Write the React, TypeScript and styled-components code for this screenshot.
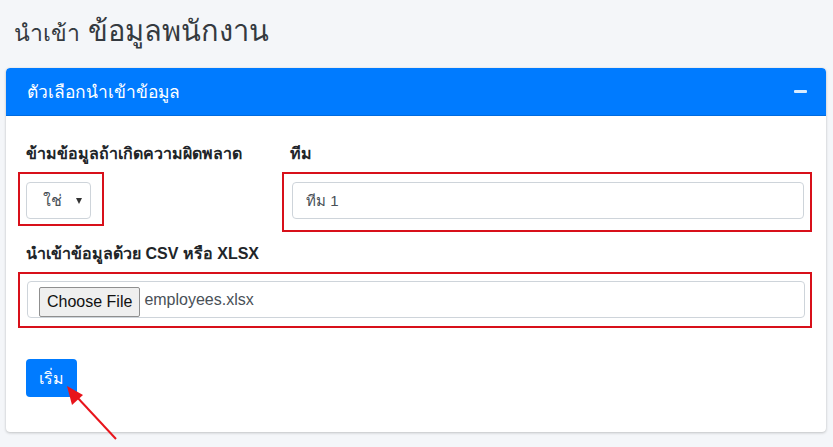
import React from 'react';
import styled, { createGlobalStyle } from 'styled-components';

const Global = createGlobalStyle`
  body {
    margin: 0;
    background: #f4f6f9;
    font-family: "Liberation Sans", "Noto Sans", "DejaVu Sans", sans-serif;
    color: #212529;
  }
`;

const App = () => {
  return (
    <Page>
      <Global />
      <Title>
        <Small>นำเข้า</Small> ข้อมูลพนักงาน
      </Title>

      <Card>
        <Header>
          <HeaderText>ตัวเลือกนำเข้าข้อมูล</HeaderText>
          <Minus />
        </Header>

        <Body>
          <Row>
            <Group>
              <Label>ข้ามข้อมูลถ้าเกิดความผิดพลาด</Label>
              <Mark $pad="8px 11px 5px 6px" $inline>
                <SelectWrap>
                  <Select defaultValue="yes">
                    <option value="yes">ใช่</option>
                    <option value="no">ไม่ใช่</option>
                  </Select>
                </SelectWrap>
              </Mark>
            </Group>
            <Group>
              <Label>ทีม</Label>
              <Mark $pad="8px 6px 11px 8px">
                <Input defaultValue="ทีม 1" />
              </Mark>
            </Group>
          </Row>

          <Group $top="12px">
            <Label>นำเข้าข้อมูลด้วย CSV หรือ XLSX</Label>
            <Mark $pad="7px 5px 8px 7px">
              <FileBox>
                <FileButton>Choose File</FileButton>
                <FileName>employees.xlsx</FileName>
              </FileBox>
            </Mark>
          </Group>

          <Start>เริ่ม</Start>
        </Body>
      </Card>

      <Arrow width="60" height="60" viewBox="0 0 60 60">
        <line x1="54" y1="55" x2="14" y2="12" stroke="#e8141b" strokeWidth="2" />
        <polygon points="5,2 21,11 10,21" fill="#e8141b" />
      </Arrow>
    </Page>
  );
};

export default App;

const Page = styled.div`
  position: relative;
  height: 447px;
  overflow: hidden;
  padding: 0 7px 0 6px;
  box-sizing: border-box;
`;

const Title = styled.h1`
  margin: 0;
  padding: 8px 0 0 8px;
  height: 56px;
  box-sizing: border-box;
  font-size: 29px;
  font-weight: 400;
  color: #343a40;
`;

const Small = styled.span`
  font-size: 23px;
`;

const Card = styled.div`
  background: #fff;
  border-radius: 4px;
  box-shadow: 0 0 1px rgba(0, 0, 0, 0.125), 0 1px 3px rgba(0, 0, 0, 0.2);
  margin-top: 12px;
  height: 364px;
  overflow: hidden;
`;

const Header = styled.div`
  background: #007bff;
  height: 48px;
  padding: 0 19px 0 21px;
  display: flex;
  align-items: center;
  justify-content: space-between;
  border-radius: 4px 4px 0 0;
  border-bottom: 1px solid rgba(0, 0, 0, 0.125);
  box-sizing: border-box;
`;

const HeaderText = styled.div`
  color: #fff;
  font-size: 17.4px;
`;

const Minus = styled.div`
  width: 13px;
  height: 3px;
  border-radius: 1px;
  background: #d9ecff;
`;

const Body = styled.div`
  padding: 28px 21px 0 21px;
  display: flex;
  flex-direction: column;
`;

const Row = styled.div`
  display: grid;
  grid-template-columns: 264px 1fr;
`;

const Group = styled.div<{ $top?: string }>`
  display: flex;
  flex-direction: column;
  margin-top: ${(p) => p.$top || '0'};
`;

const Label = styled.div`
  font-size: 16px;
  font-weight: 700;
  margin: 0 0 8px -1px;
  line-height: 20px;
`;

const Mark = styled.div<{ $pad: string; $inline?: boolean }>`
  border: 2px solid #d8101a;
  padding: ${(p) => p.$pad};
  margin-left: -9px;
  margin-right: -7px;
  align-self: ${(p) => (p.$inline ? 'flex-start' : 'stretch')};
`;

const SelectWrap = styled.div`
  position: relative;
  width: 65px;

  &::after {
    content: '';
    position: absolute;
    right: 9px;
    top: 16px;
    border-left: 3.5px solid transparent;
    border-right: 3.5px solid transparent;
    border-top: 6px solid #333;
    pointer-events: none;
  }
`;

const Select = styled.select`
  appearance: none;
  width: 65px;
  height: 37px;
  border: 1px solid #ced4da;
  border-radius: 4px;
  background: #fff;
  font-size: 16px;
  font-family: inherit;
  color: #495057;
  padding: 0 0 0 16px;
`;

const Input = styled.input`
  width: 100%;
  box-sizing: border-box;
  height: 37px;
  border: 1px solid #ced4da;
  border-radius: 4px;
  font-size: 15px;
  font-family: inherit;
  color: #495057;
  padding: 0 13px;
`;

const FileBox = styled.div`
  height: 37px;
  border: 1px solid #ced4da;
  border-radius: 4px;
  display: flex;
  align-items: center;
  padding-left: 11px;
  gap: 4px;
  box-sizing: border-box;
`;

const FileButton = styled.button`
  height: 30px;
  margin-top: 5px;
  padding: 0 7px;
  font-family: "Liberation Sans", sans-serif;
  font-size: 16px;
  color: #111;
  background: #efefef;
  border: 1px solid #8f8f8f;
  border-radius: 2px;
`;

const FileName = styled.span`
  font-size: 16px;
  color: #495057;
`;

const Start = styled.button`
  align-self: flex-start;
  margin-top: 31px;
  margin-left: -1px;
  width: 51px;
  height: 38px;
  background: #007bff;
  color: #fff;
  font-size: 16px;
  font-family: inherit;
  border: none;
  border-radius: 4px;
`;

const Arrow = styled.svg`
  position: absolute;
  left: 62px;
  top: 384px;
`;
